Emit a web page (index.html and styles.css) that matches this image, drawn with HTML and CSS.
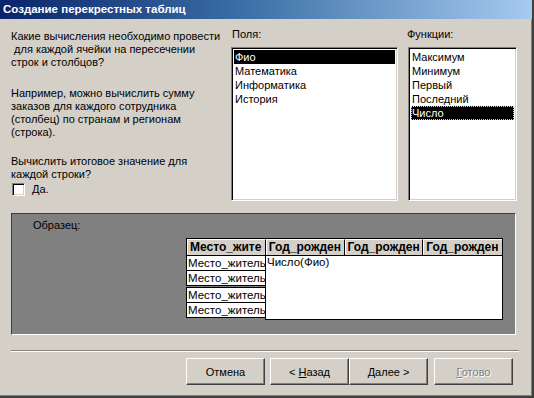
FILE: index.html
```html
<!DOCTYPE html>
<html lang="ru">
<head>
<meta charset="utf-8">
<title>Создание перекрестных таблиц</title>
<link rel="stylesheet" href="styles.css">
</head>
<body>
<div class="window">
  <div class="titlebar">Создание перекрестных таблиц</div>
  <div class="client">
    <div class="top">
      <div class="intro">
        <p class="para p1">Какие вычисления необходимо провести<br>&nbsp;для каждой ячейки на пересечении<br>строк и столбцов?</p>
        <p class="para p2">Например, можно вычислить сумму<br>заказов для каждого сотрудника<br>(столбец) по странам и регионам<br>(строка).</p>
        <p class="para p3">Вычислить итоговое значение для<br>каждой строки?</p>
        <label class="check"><span class="box"></span><span><u>Д</u>а.</span></label>
      </div>
      <div class="fields">
        <div class="label">Поля:</div>
        <ul class="list list-fields">
          <li class="sel">Фио</li>
          <li>Математика</li>
          <li>Информатика</li>
          <li>История</li>
        </ul>
      </div>
      <div class="funcs">
        <div class="label">Функции:</div>
        <ul class="list list-funcs">
          <li>Максимум</li>
          <li>Минимум</li>
          <li>Первый</li>
          <li>Последний</li>
          <li class="sel focus">Число</li>
        </ul>
      </div>
    </div>
    <div class="sample">
      <div class="sample-label">Образец:</div>
      <div class="grid">
        <div class="head">
          <div class="hcell">Место_жите</div>
          <div class="hcell">Год_рожден</div>
          <div class="hcell">Год_рожден</div>
          <div class="hcell">Год_рожден</div>
        </div>
        <div class="body">
          <div class="rows">
            <div class="rcell">Место_жительс</div>
            <div class="rcell">Место_жительс</div>
            <div class="rcell r3">Место_жительс</div>
            <div class="rcell r4">Место_жительс</div>
          </div>
          <div class="data">Число(Фио)</div>
        </div>
      </div>
    </div>
    <div class="sep"></div>
    <div class="buttons">
      <button class="btn">Отмена</button>
      <button class="btn btn-back">&lt; <u>Н</u>азад</button>
      <button class="btn btn-next"><u>Д</u>алее &gt;</button>
      <button class="btn btn-done" disabled><u>Г</u>отово</button>
    </div>
  </div>
</div>
</body>
</html>
```

FILE: styles.css
```css
* { box-sizing: border-box; }
html, body {
  margin: 0;
  padding: 0;
  width: 534px;
  height: 398px;
  overflow: hidden;
  background: #d4d0c8;
  font-family: "Liberation Sans", Arial, sans-serif;
  font-size: 11px;
  color: #000;
}
.window {
  width: 534px;
  height: 398px;
  border-right: 2px solid #404040;
  border-bottom: 2px solid #404040;
  box-shadow: inset -1px -1px 0 #808080;
  display: flex;
  flex-direction: column;
}
.titlebar {
  height: 19px;
  line-height: 19px;
  padding-left: 3px;
  color: #fff;
  font-weight: bold;
  font-size: 11.5px;
  background: linear-gradient(to right, #0a246a 0%, #3a6ea5 45%, #a6caf0 100%);
}
.client {
  flex: 1;
  display: flex;
  flex-direction: column;
  padding: 9px 0 0 11px;
}
.top {
  display: flex;
  height: 183px;
}
.intro {
  width: 220px;
  padding-top: 2px;
}
.para {
  margin: 0;
  line-height: 13px;
}
.p2 { margin-top: 18px; }
.p3 { margin-top: 16px; }
.check {
  display: flex;
  align-items: center;
  gap: 7px;
  margin-top: 1px;
  padding-left: 1px;
  height: 14px;
}
.box {
  width: 13px;
  height: 13px;
  background: #fff;
  border-top: 1px solid #808080;
  border-left: 1px solid #808080;
  border-right: 1px solid #fff;
  border-bottom: 1px solid #fff;
  box-shadow: inset 1px 1px 0 #000, inset -1px -1px 0 #d4d0c8;
}
.fields {
  width: 167px;
}
.funcs {
  width: 109px;
  margin-left: 10px;
}
.funcs .label { margin-left: -2px; }
.label {
  height: 19px;
  line-height: 13px;
  padding-left: 1px;
}
.list {
  list-style: none;
  margin: 0;
  padding: 2px;
  height: 154px;
  background: #fff;
  border-top: 1px solid #808080;
  border-left: 1px solid #808080;
  border-right: 1px solid #fff;
  border-bottom: 1px solid #fff;
  box-shadow: inset 1px 1px 0 #000, inset -1px -1px 0 #d4d0c8;
}
.list li {
  height: 14px;
  line-height: 14px;
  padding-left: 1px;
  white-space: nowrap;
}
.list li.sel {
  background: #000;
  color: #fff;
}
.list li.focus {
  outline: 1px dotted #d4d0c8;
  outline-offset: -1px;
}
.sample {
  margin-top: 2px;
  width: 505px;
  height: 122px;
  background: #808080;
  border-top: 1px solid #404040;
  border-left: 1px solid #404040;
  border-right: 1px solid #fff;
  border-bottom: 1px solid #fff;
  display: flex;
  flex-direction: column;
}
.sample-label {
  padding: 5px 0 0 21px;
  height: 24px;
  line-height: 13px;
}
.grid {
  margin-left: 174px;
  width: 317px;
}
.head {
  display: flex;
  height: 17px;
  border: 1px solid #000;
  border-bottom: none;
  background: #d4d0c8;
}
.hcell {
  width: 79px;
  height: 16px;
  line-height: 15px;
  padding-left: 2px;
  font-weight: bold;
  font-size: 12px;
  white-space: nowrap;
  overflow: hidden;
  border-top: 1px solid #fff;
  border-left: 1px solid #fff;
  border-right: 1px solid #000;
}
.hcell:last-child { border-right: none; }
.body {
  display: flex;
}
.rows {
  width: 79px;
  display: flex;
  flex-direction: column;
}
.rcell {
  height: 16px;
  line-height: 14px;
  background: #fff;
  border: 1px solid #000;
  border-right: none;
  margin-bottom: -1px;
  padding-left: 1px;
  white-space: nowrap;
  overflow: hidden;
  font-size: 11.5px;
}
.rcell.r3 { margin-top: 2px; }
.data {
  width: 238px;
  height: 65px;
  background: #fff;
  border: 1px solid #000;
  line-height: 13px;
  padding-left: 1px;
  font-size: 11.5px;
}
.sep {
  margin-top: 15px;
  width: 508px;
  height: 2px;
  border-top: 1px solid #808080;
  border-bottom: 1px solid #fff;
}
.buttons {
  display: flex;
  margin-top: 6px;
  padding-left: 175px;
}
.btn {
  width: 79px;
  height: 27px;
  font-family: "Liberation Sans", Arial, sans-serif;
  font-size: 11px;
  color: #000;
  background: #d4d0c8;
  border: none;
  border-top: 1px solid #fff;
  border-left: 1px solid #fff;
  border-right: 1px solid #404040;
  border-bottom: 1px solid #404040;
  box-shadow: inset -1px -1px 0 #808080;
  padding: 0;
}
.btn-back { margin-left: 5px; }
.btn-done {
  margin-left: 6px;
  color: #808080;
  text-shadow: 1px 1px 0 #fff;
}
```
